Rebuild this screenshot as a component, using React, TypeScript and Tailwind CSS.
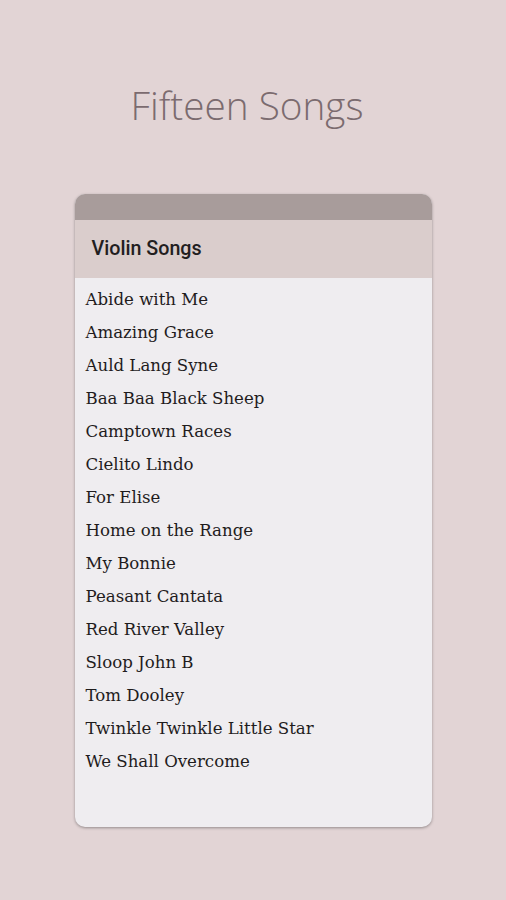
const songs = [
  "Abide with Me",
  "Amazing Grace",
  "Auld Lang Syne",
  "Baa Baa Black Sheep",
  "Camptown Races",
  "Cielito Lindo",
  "For Elise",
  "Home on the Range",
  "My Bonnie",
  "Peasant Cantata",
  "Red River Valley",
  "Sloop John B",
  "Tom Dooley",
  "Twinkle Twinkle Little Star",
  "We Shall Overcome",
];

export default function App() {
  return (
    <div className="min-h-[900px] w-full bg-[#e2d4d5] flex flex-col items-center">
      {/* Title */}
      <h1 className="mt-[80px] mr-[12px] h-[50px] leading-[50px] text-[38.7px] font-light text-[#7b6b6f] font-['Open_Sans',sans-serif]">
        Fifteen Songs
      </h1>

      {/* Card */}
      <div className="mt-[64px] w-[357px] h-[633px] rounded-[10px] overflow-hidden bg-[#efedf0] shadow-[0_1px_3px_rgba(0,0,0,0.35)] flex flex-col">
        <div className="h-[26px] bg-[#a89c9b]" />
        <div className="h-[58px] bg-[#dacdcc] flex items-center px-[17px] font-['Roboto',sans-serif] font-medium text-[19.7px] text-[#221e1f]">
          Violin Songs
        </div>
        <ul className="pt-[5px] px-[11px] font-['DejaVu_Serif',serif] text-[16.6px] text-[#1f1c1d]">
          {songs.map((s) => (
            <li key={s} className="h-[33px] leading-[33px]">
              {s}
            </li>
          ))}
        </ul>
      </div>
    </div>
  );
}
